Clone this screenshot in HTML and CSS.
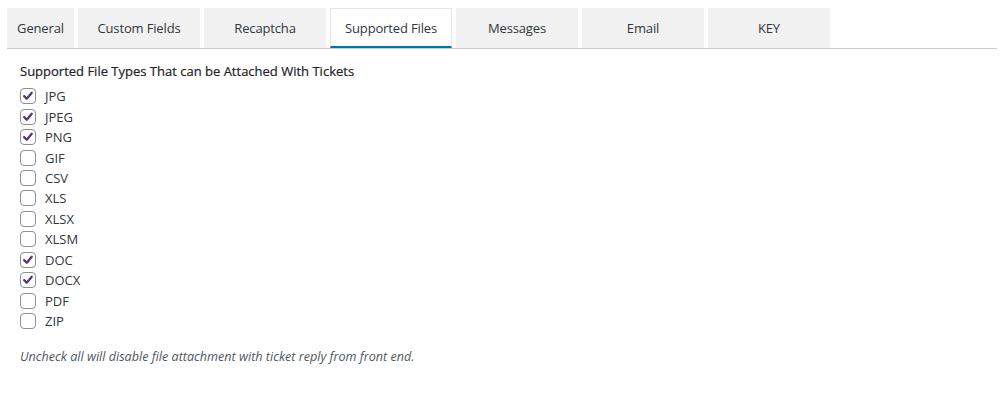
FILE: index.html
```html
<!DOCTYPE html>
<html>
<head>
<meta charset="utf-8">
<link rel="stylesheet" href="styles.css">
</head>
<body>
<div class="tabs">
  <a class="tab tab-short">General</a>
  <a class="tab">Custom Fields</a>
  <a class="tab">Recaptcha</a>
  <a class="tab active">Supported Files</a>
  <a class="tab">Messages</a>
  <a class="tab">Email</a>
  <a class="tab">KEY</a>
</div>
<div class="panel">
  <h3 class="title">Supported File Types That can be Attached With Tickets</h3>
  <ul class="list">
    <li><label><input type="checkbox" checked> JPG</label></li>
    <li><label><input type="checkbox" checked> JPEG</label></li>
    <li><label><input type="checkbox" checked> PNG</label></li>
    <li><label><input type="checkbox"> GIF</label></li>
    <li><label><input type="checkbox"> CSV</label></li>
    <li><label><input type="checkbox"> XLS</label></li>
    <li><label><input type="checkbox"> XLSX</label></li>
    <li><label><input type="checkbox"> XLSM</label></li>
    <li><label><input type="checkbox" checked> DOC</label></li>
    <li><label><input type="checkbox" checked> DOCX</label></li>
    <li><label><input type="checkbox"> PDF</label></li>
    <li><label><input type="checkbox"> ZIP</label></li>
  </ul>
  <p class="note">Uncheck all will disable file attachment with ticket reply from front end.</p>
</div>
</body>
</html>
```
FILE: styles.css
```css
body {
  margin: 0;
  background: #fff;
  font-family: "Open Sans", "Noto Sans", sans-serif;
  font-size: 13px;
  color: #23282d;
}
.tabs {
  display: flex;
  gap: 4px;
  margin: 8px 9px 0 7px;
  border-bottom: 1px solid #ccc;
}
.tab {
  width: 122px;
  height: 40px;
  display: flex;
  align-items: center;
  justify-content: center;
  background: #f1f1f1;
  color: #32373c;
  box-sizing: border-box;
  cursor: pointer;
  letter-spacing: -0.15px;
}
.tab-short { width: 67px; }
.tab.active {
  background: #fff;
  border: 1px solid #e5e5e5;
  border-bottom: 2px solid #0073aa;
}
.panel {
  padding: 0 20px;
}
.title {
  margin: 13px 0 6px;
  font-size: 13px;
  font-weight: 400;
  color: #1d2327;
  line-height: 18px;
  -webkit-text-stroke: 0.2px #1d2327;
}
.list {
  list-style: none;
  margin: 0;
  padding: 0;
}
.list li {
  height: 20.45px;
  display: flex;
  align-items: center;
}
.list label {
  display: flex;
  align-items: center;
  gap: 9px;
  color: #32373c;
}
.list input {
  appearance: none;
  -webkit-appearance: none;
  margin: 0;
  width: 16px;
  height: 16px;
  border: 1px solid #8c8f94;
  border-radius: 4px;
  background: #fff;
  box-sizing: border-box;
}
.list input:checked {
  background: #fff url("data:image/svg+xml;utf8,<svg xmlns='http://www.w3.org/2000/svg' viewBox='0 0 16 16'><path d='M3.6 8.2 L6.6 11.2 L12.3 4.3' fill='none' stroke='%23523a73' stroke-width='2.6' stroke-linecap='round' stroke-linejoin='round'/></svg>") center/14px no-repeat;
}
.note {
  margin: 17px 0 0;
  font-size: 12.6px;
  font-style: italic;
  color: #50575e;
}
```
